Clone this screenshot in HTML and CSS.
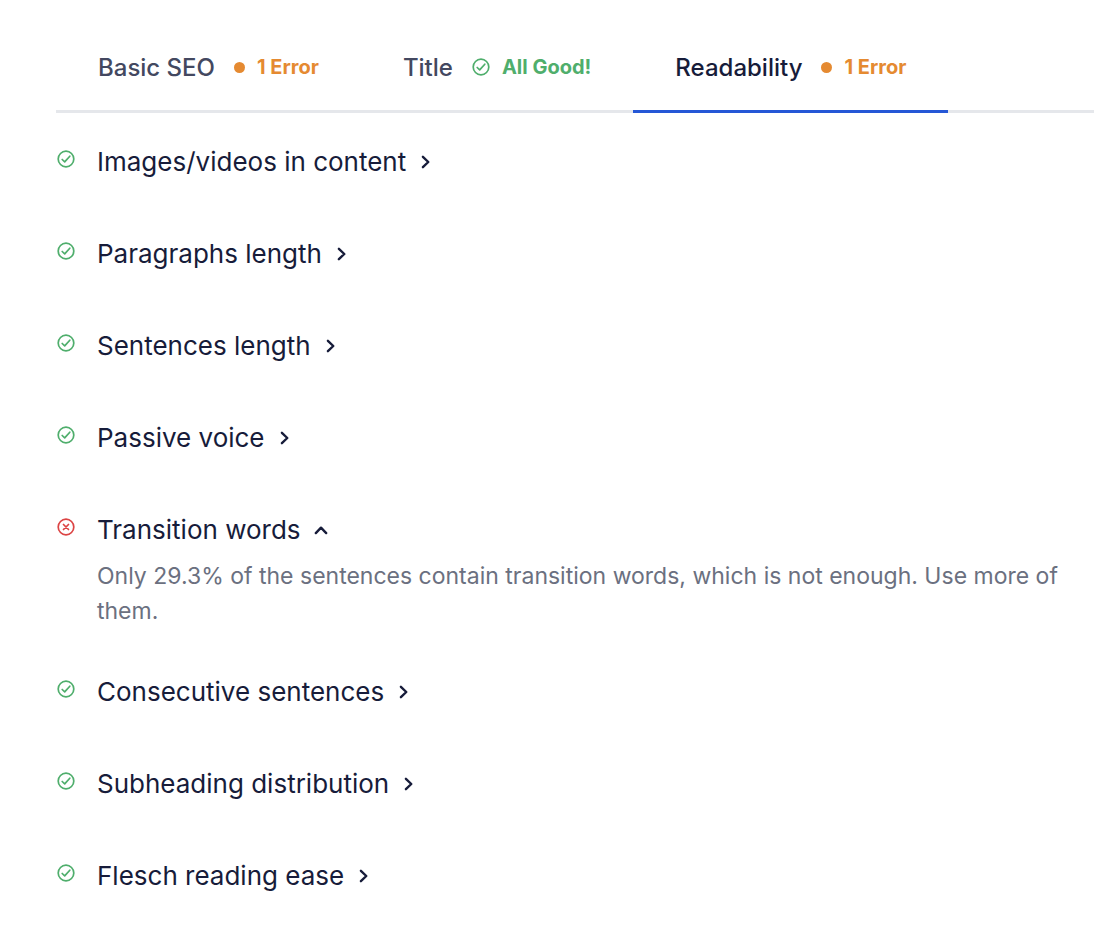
FILE: index.html
```
<!DOCTYPE html>
<html lang="en">
<head>
    <meta charset="UTF-8">
    <meta name="viewport" content="width=device-width, initial-scale=1.0">
    <title>SEO Analysis</title>
    <link rel="stylesheet" href="styles.css">
</head>
<body>

    <!-- Shared icons -->
    <svg class="sprite" aria-hidden="true">
        <symbol id="icon-check" viewBox="0 0 18 18">
            <circle cx="9" cy="9" r="7.8"/>
            <path d="M5.2 9.5 L7.7 11.9 L12.8 6.2"/>
        </symbol>
        <symbol id="icon-cross" viewBox="0 0 18 18">
            <circle cx="9" cy="9" r="7.8"/>
            <path d="M6.5 6.5 L11.5 11.5 M11.5 6.5 L6.5 11.5"/>
        </symbol>
        <symbol id="icon-arrow" viewBox="0 0 16 16">
            <path d="M4.9 2.8 L10.3 8 L4.9 13.2"/>
        </symbol>
    </svg>

    <div class="tabs" role="tablist">
        <button class="tab" role="tab" aria-selected="false">
            Basic SEO
            <span class="status error"><span class="dot"></span>1 Error</span>
        </button>
        <button class="tab" role="tab" aria-selected="false">
            Title
            <span class="status good"><svg class="icon"><use href="#icon-check"/></svg>All Good!</span>
        </button>
        <button class="tab active" role="tab" aria-selected="true">
            Readability
            <span class="status error"><span class="dot"></span>1 Error</span>
        </button>
    </div>

    <ul class="checks">
        <li class="check">
            <svg class="icon good"><use href="#icon-check"/></svg>
            <button class="check-title" aria-expanded="false">Images/videos in content <svg class="arrow"><use href="#icon-arrow"/></svg></button>
        </li>
        <li class="check">
            <svg class="icon good"><use href="#icon-check"/></svg>
            <button class="check-title" aria-expanded="false">Paragraphs length <svg class="arrow"><use href="#icon-arrow"/></svg></button>
        </li>
        <li class="check">
            <svg class="icon good"><use href="#icon-check"/></svg>
            <button class="check-title" aria-expanded="false">Sentences length <svg class="arrow"><use href="#icon-arrow"/></svg></button>
        </li>
        <li class="check">
            <svg class="icon good"><use href="#icon-check"/></svg>
            <button class="check-title" aria-expanded="false">Passive voice <svg class="arrow"><use href="#icon-arrow"/></svg></button>
        </li>
        <li class="check open">
            <svg class="icon bad"><use href="#icon-cross"/></svg>
            <button class="check-title" aria-expanded="true">Transition words <svg class="arrow"><use href="#icon-arrow"/></svg></button>
            <p class="check-text">Only 29.3% of the sentences contain transition words, which is not enough. Use more of them.</p>
        </li>
        <li class="check">
            <svg class="icon good"><use href="#icon-check"/></svg>
            <button class="check-title" aria-expanded="false">Consecutive sentences <svg class="arrow"><use href="#icon-arrow"/></svg></button>
        </li>
        <li class="check">
            <svg class="icon good"><use href="#icon-check"/></svg>
            <button class="check-title" aria-expanded="false">Subheading distribution <svg class="arrow"><use href="#icon-arrow"/></svg></button>
        </li>
        <li class="check">
            <svg class="icon good"><use href="#icon-check"/></svg>
            <button class="check-title" aria-expanded="false">Flesch reading ease <svg class="arrow"><use href="#icon-arrow"/></svg></button>
        </li>
    </ul>

</body>
</html>
```
FILE: styles.css
```
* {
    box-sizing: border-box;
}
body {
    margin: 0;
    padding: 24px 22px 0 56px;
    background: #fff;
    color: #171c3a;
    font-family: Inter, "Liberation Sans", sans-serif;
}
button {
    padding: 0;
    border: none;
    background: none;
    color: inherit;
    font-family: inherit;
    cursor: pointer;
}
.sprite {
    display: none;
}

/* Tabs */
.tabs {
    display: flex;
    box-shadow: inset 0 -3px #e5e7eb;
}
.tab {
    display: flex;
    align-items: center;
    gap: 19px;
    height: 89px;
    padding: 0 42px;
    border-bottom: 3px solid transparent;
    color: #434860;
    font-size: 24px;
    font-weight: 500;
    white-space: nowrap;
}
.tab.active {
    border-bottom-color: #2557d6;
    color: #171c3a;
}
.status {
    display: flex;
    align-items: center;
    gap: 12px;
    font-size: 20px;
    font-weight: 700;
}
.dot {
    width: 11px;
    height: 11px;
    border-radius: 50%;
    background: #e58a31;
}

/* Icons */
.icon {
    flex: none;
    width: 18px;
    height: 18px;
    fill: none;
    stroke: currentColor;
    stroke-width: 1.7;
    stroke-linecap: round;
    stroke-linejoin: round;
}
.arrow {
    width: 16px;
    height: 16px;
    margin-top: 1px;
    fill: none;
    stroke: currentColor;
    stroke-width: 2.4;
    stroke-linecap: round;
    stroke-linejoin: round;
}
.good {
    color: #4fae6c;
}
.bad {
    color: #dc4444;
}
.error {
    color: #e58a31;
}

/* Checks */
.checks {
    margin: 0;
    padding: 28px 22px 0 0;
    list-style: none;
}
.check {
    display: grid;
    grid-template-columns: 41px 1fr;
    padding-bottom: 52px;
}
.check .icon {
    margin: 9px 0 0 1px;
}
.check-title {
    display: flex;
    align-items: center;
    justify-self: start;
    gap: 12px;
    height: 40px;
    font-size: 26px;
}
.check.open {
    padding-bottom: 42px;
}
.open .arrow {
    transform: rotate(-90deg);
}
.check-text {
    grid-column: 2;
    margin: 10px 0 0;
    color: #6b7080;
    font-size: 23px;
    line-height: 35px;
}
```
